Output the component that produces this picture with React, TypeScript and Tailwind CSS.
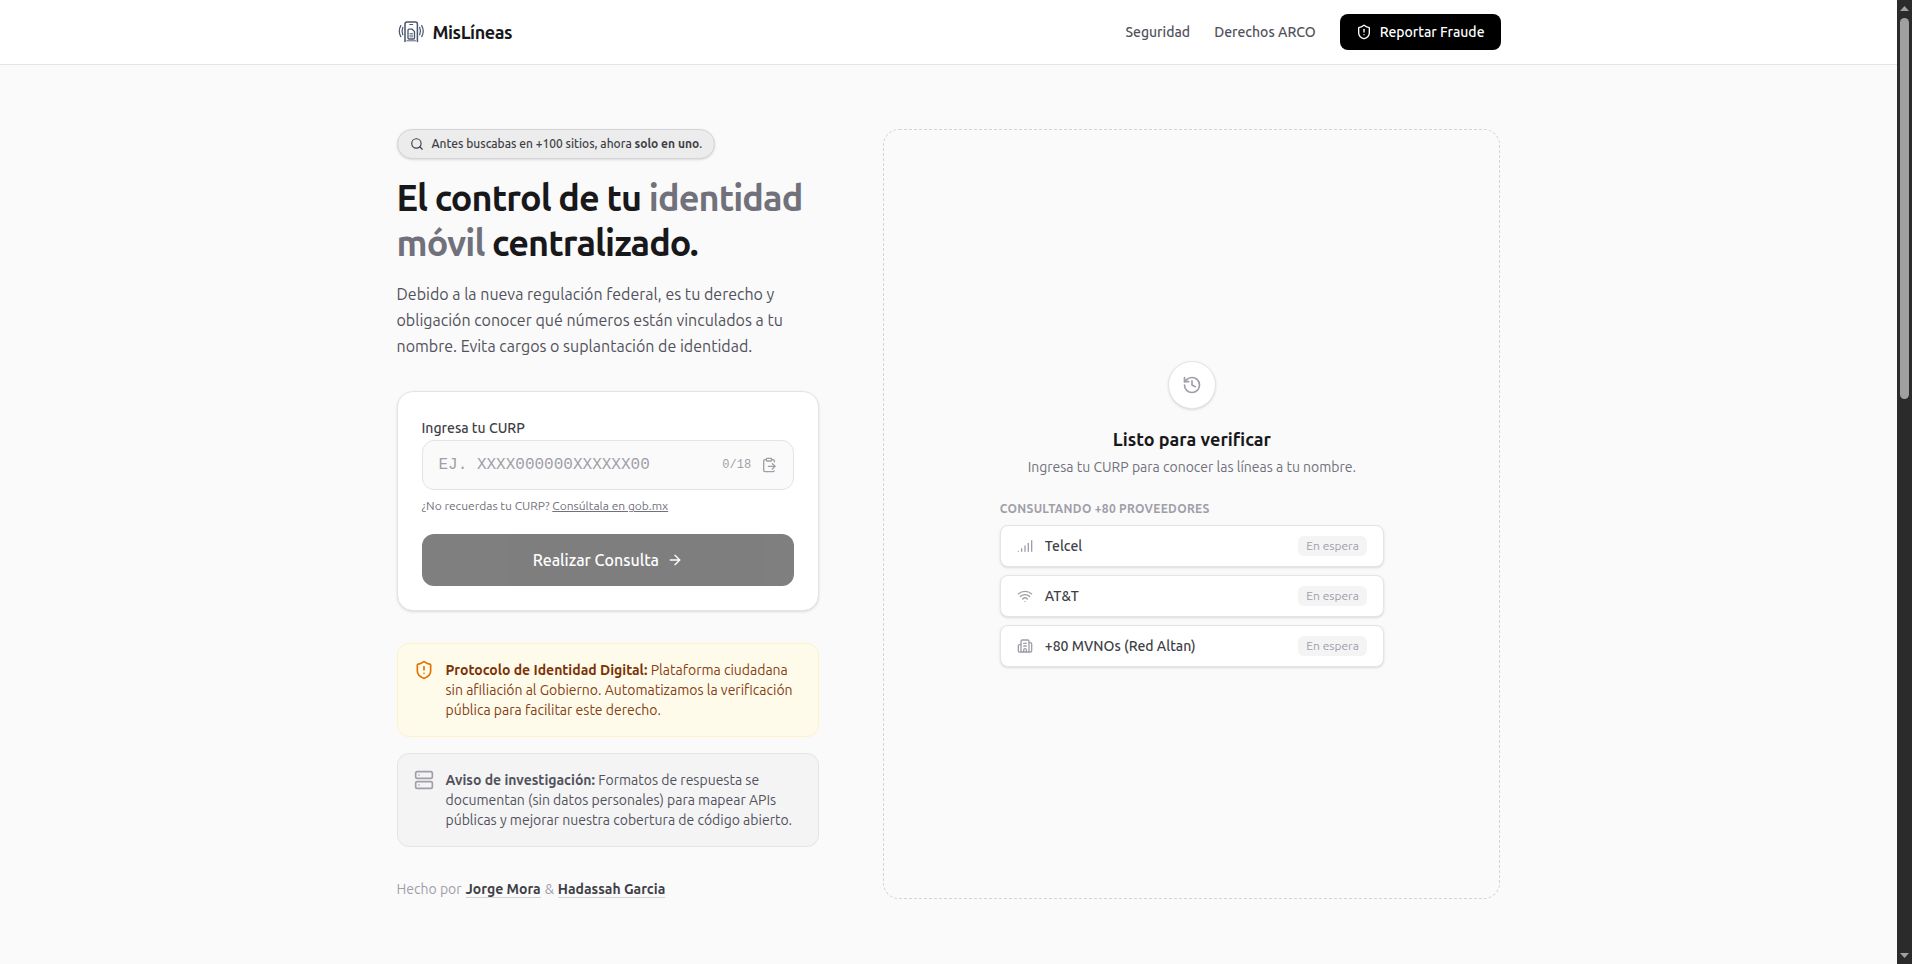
import React, { useState } from 'react';
import {
  ArrowRight,
  Building2,
  ClipboardPaste,
  History,
  Search,
  Server,
  ShieldAlert,
  Signal,
  Wifi
} from 'lucide-react';

const CURP_LENGTH = 18;

const providers = [
  { icon: Signal, name: 'Telcel' },
  { icon: Wifi, name: 'AT&T' },
  { icon: Building2, name: '+80 MVNOs (Red Altan)' }
];

function Logo() {
  return (
    <svg
      viewBox="0 0 28 28"
      className="w-7 h-7 text-slate-600"
      fill="none"
      stroke="currentColor"
      strokeWidth="1.5"
      strokeLinecap="round"
      strokeLinejoin="round"
      aria-hidden="true"
    >
      {/* Phone */}
      <path d="M8 23.6V5.9a2 2 0 0 1 2-2h8.4a2 2 0 0 1 2 2v17.7" />
      <path d="M9.8 22.8h8.8" strokeWidth="0.9" />
      <path d="M12.8 6.5h2.8" strokeWidth="1.2" />
      {/* SIM card */}
      <path d="M11 12.2a1 1 0 0 1 1-1h3.2l2.3 2.4v6.4a1 1 0 0 1-1 1H12a1 1 0 0 1-1-1z" strokeWidth="1.3" />
      <path d="M12.9 15.6h2.8M12.9 17.2h2.8M12.9 18.8h2.8" strokeWidth="0.8" />
      {/* Signal waves */}
      <path d="M5.8 9.4c-1 2.3-1 5.1 0 7.4M22.7 9.4c1 2.3 1 5.1 0 7.4" strokeWidth="1.2" />
      <path d="M3.8 7.6c-1.9 3.4-1.9 7.6 0 11M24.7 7.6c1.9 3.4 1.9 7.6 0 11" strokeWidth="1.2" />
    </svg>
  );
}

function Scrollbar() {
  return (
    <div className="sticky top-0 h-screen w-[15px] shrink-0 bg-[#2b2b2b] flex flex-col items-center py-1.5" aria-hidden="true">
      <svg viewBox="0 0 9 5" className="w-[9px] h-[5px] mb-[7px] shrink-0 fill-[#a0a0a0]">
        <path d="M4.5 0 9 5H0z" />
      </svg>
      <div className="w-[9px] h-2/5 rounded-full bg-[#a0a0a0]"></div>
      <svg viewBox="0 0 9 5" className="w-[9px] h-[5px] mt-auto shrink-0 fill-[#a0a0a0]">
        <path d="M0 0h9L4.5 5z" />
      </svg>
    </div>
  );
}

export default function App() {
  const [curp, setCurp] = useState('');

  const handlePaste = async () => {
    const text = await navigator.clipboard.readText();
    setCurp(text.trim().toUpperCase().slice(0, CURP_LENGTH));
  };

  return (
    <div className="flex min-h-screen bg-[#fafafa] font-['Ubuntu','Lato',sans-serif] text-zinc-900">
      <div className="flex-1 min-w-0">
        {/* Header */}
        <header className="bg-white border-b border-zinc-200">
          <div className="max-w-6xl mx-auto px-6 h-16 flex items-center justify-between">
            <a href="#" className="flex items-center gap-2">
              <Logo />
              <span className="text-lg font-bold tracking-tight">MisLíneas</span>
            </a>
            <nav className="flex items-center gap-6 text-sm font-medium text-zinc-600">
              <a href="#seguridad">Seguridad</a>
              <a href="#arco">Derechos ARCO</a>
              <button className="flex items-center gap-2 px-4 py-2 bg-black text-white rounded-lg">
                <ShieldAlert className="w-4 h-4" />
                Reportar Fraude
              </button>
            </nav>
          </div>
        </header>

        <main className="max-w-6xl mx-auto px-6 py-16 grid lg:grid-cols-12 gap-16">
          {/* Left column */}
          <section className="lg:col-span-5 space-y-8">
            <div className="space-y-4">
              <div className="flex w-fit items-center gap-2 px-3 py-1.5 rounded-full border border-zinc-300 bg-[#ececec] shadow-sm text-xs font-medium text-zinc-700">
                <Search className="w-3.5 h-3.5" />
                <span>
                  Antes buscabas en +100 sitios, ahora <strong className="font-bold">solo en uno</strong>.
                </span>
              </div>
              <h1 className="text-4xl leading-tight font-bold tracking-tight">
                El control de tu <span className="text-zinc-500">identidad móvil</span> centralizado.
              </h1>
              <p className="text-base leading-relaxed text-zinc-600">
                Debido a la nueva regulación federal, es tu derecho y obligación conocer qué números están
                vinculados a tu nombre. Evita cargos o suplantación de identidad.
              </p>
            </div>

            {/* CURP form */}
            <form
              onSubmit={(e) => e.preventDefault()}
              className="bg-white border border-zinc-200 rounded-2xl shadow-sm p-6"
            >
              <label htmlFor="curp" className="block text-sm leading-6 font-medium text-zinc-700">
                Ingresa tu CURP
              </label>
              <div className="flex items-center gap-2.5 h-[50px] px-4 bg-[#fafafa] border border-zinc-200 rounded-xl text-zinc-400">
                <input
                  id="curp"
                  type="text"
                  value={curp}
                  maxLength={CURP_LENGTH}
                  onChange={(e) => setCurp(e.target.value.toUpperCase())}
                  placeholder="EJ. XXXX000000XXXXXX00"
                  className="flex-1 min-w-0 bg-transparent outline-none font-['Liberation_Mono',monospace] text-base text-zinc-900 placeholder:text-zinc-400"
                />
                <span className="font-['Liberation_Mono',monospace] text-xs">
                  {curp.length}/{CURP_LENGTH}
                </span>
                <button type="button" onClick={handlePaste} aria-label="Pegar CURP">
                  <ClipboardPaste className="w-4 h-4" />
                </button>
              </div>
              <p className="mt-2 text-xs text-zinc-500">
                ¿No recuerdas tu CURP?{' '}
                <a href="https://www.gob.mx/curp/" className="underline">Consúltala en gob.mx</a>
              </p>
              <button
                type="submit"
                disabled={curp.length !== CURP_LENGTH}
                className="mt-5 w-full h-[52px] flex items-center justify-center gap-2 bg-black text-white text-base font-medium rounded-xl disabled:opacity-50"
              >
                Realizar Consulta
                <ArrowRight className="w-4 h-4" />
              </button>
            </form>

            {/* Notices */}
            <div className="space-y-4 text-sm">
              <div className="flex gap-3 p-4 rounded-xl bg-amber-50 border border-amber-100 text-[#854012]">
                <ShieldAlert className="w-5 h-5 shrink-0 text-amber-600" />
                <p>
                  <strong className="font-bold text-amber-900">Protocolo de Identidad Digital:</strong> Plataforma ciudadana
                  sin afiliación al Gobierno. Automatizamos la verificación pública para facilitar este derecho.
                </p>
              </div>
              <div className="flex gap-3 p-4 rounded-xl bg-zinc-100 border border-zinc-200 text-zinc-600">
                <Server className="w-5 h-5 shrink-0 text-zinc-400" />
                <p>
                  <strong className="font-bold">Aviso de investigación:</strong> Formatos de respuesta se
                  documentan (sin datos personales) para mapear APIs públicas y mejorar nuestra cobertura de
                  código abierto.
                </p>
              </div>
            </div>

            <div className="flex gap-1 text-sm text-zinc-400">
              <span>Hecho por</span>
              <span>
                <a href="#jorge" className="font-bold text-zinc-700 border-b border-zinc-300">Jorge Mora</a>
              </span>
              <span>&amp;</span>
              <span>
                <a href="#hadassah" className="font-bold text-zinc-700 border-b border-zinc-300">Hadassah Garcia</a>
              </span>
            </div>
          </section>

          {/* Results panel */}
          <section className="lg:col-span-7 flex flex-col items-center justify-center p-8 border border-dashed border-zinc-300 rounded-2xl">
            <div className="w-12 h-12 mb-4 flex items-center justify-center rounded-full bg-white border border-zinc-200 shadow-sm">
              <History className="w-5 h-5 text-zinc-400" />
            </div>
            <h2 className="text-lg font-bold">Listo para verificar</h2>
            <p className="mt-1 text-sm text-zinc-500">Ingresa tu CURP para conocer las líneas a tu nombre.</p>

            <div className="w-full max-w-sm mt-6 space-y-2">
              <h3 className="text-xs font-bold tracking-wide text-zinc-400 uppercase">Consultando +80 proveedores</h3>
              {providers.map((provider) => {
                const Icon = provider.icon;
                return (
                  <div
                    key={provider.name}
                    className="flex items-center justify-between px-4 py-2.5 bg-white border border-zinc-200 rounded-lg shadow-sm"
                  >
                    <div className="flex items-center gap-3">
                      <Icon className="w-4 h-4 text-zinc-400" />
                      <span className="text-sm font-medium text-zinc-700">{provider.name}</span>
                    </div>
                    <span className="px-2 py-0.5 rounded-md bg-zinc-100 text-xs text-zinc-400">En espera</span>
                  </div>
                );
              })}
            </div>
          </section>
        </main>
      </div>

      <Scrollbar />
    </div>
  );
}
